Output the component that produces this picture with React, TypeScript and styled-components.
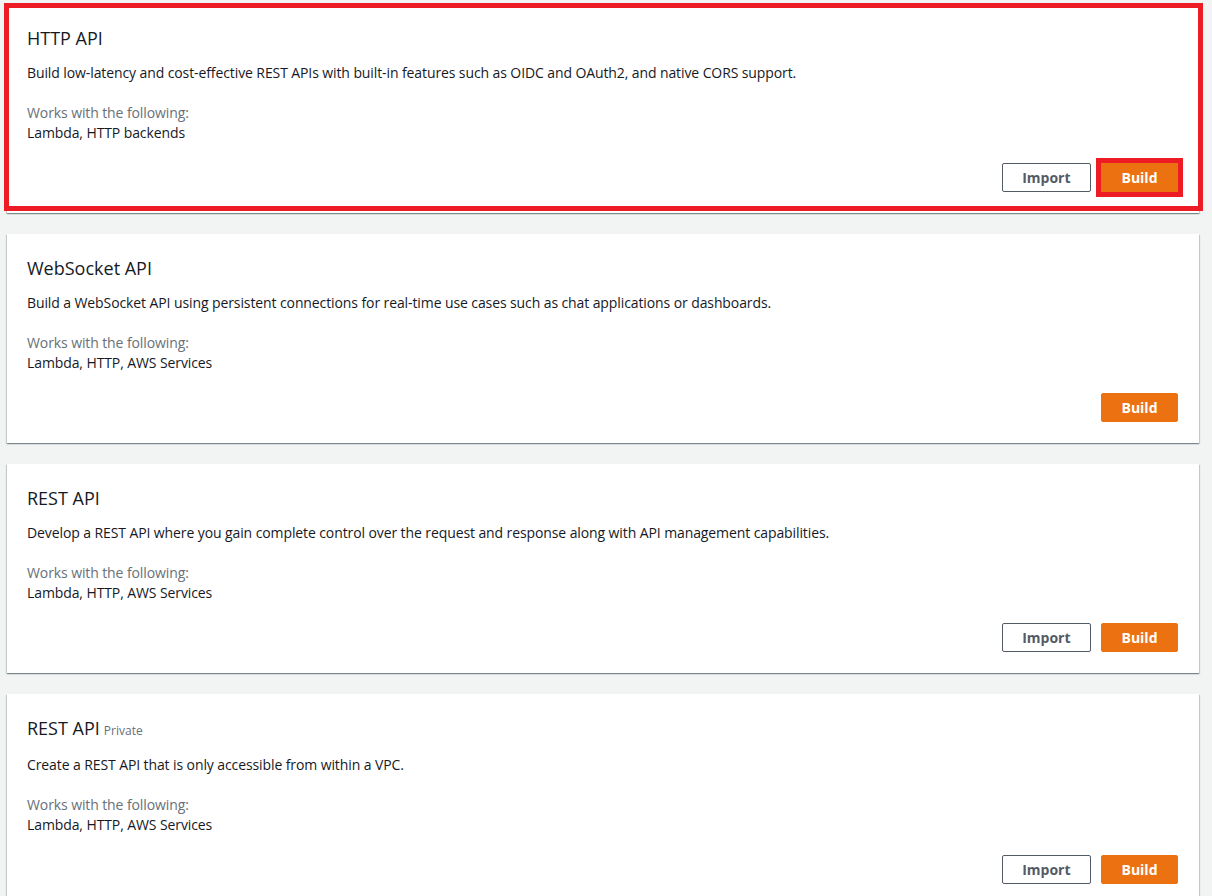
import React from "react";
import styled, { createGlobalStyle } from "styled-components";

const GlobalStyle = createGlobalStyle`
  html, body {
    margin: 0;
    padding: 0;
    background: #f2f3f3;
  }
  body {
    font-family: "Open Sans", "Noto Sans", Arial, sans-serif;
    color: #16191f;
  }
`;

const Page = styled.main`
  display: flex;
  flex-direction: column;
  gap: 21px;
  padding: 4px 13px 40px 7px;
  min-height: 896px;
  box-sizing: border-box;
`;

const Card = styled.section`
  position: relative;
  background: #ffffff;
  padding: 20px 21px 21px 20px;
  box-shadow: 0 1px 1px 0 rgba(0, 28, 36, 0.3), 1px 1px 1px 0 rgba(0, 28, 36, 0.15),
    -1px 1px 1px 0 rgba(0, 28, 36, 0.15);
  display: flex;
  flex-direction: column;
`;

const Highlight = styled.div`
  position: absolute;
  left: -3px;
  top: -1px;
  right: -4px;
  bottom: 2px;
  border: 5px solid #ed1c24;
  pointer-events: none;
`;

const Title = styled.h2<{ $tagged?: boolean }>`
  margin: 0 0 ${(p) => (p.$tagged ? "2px" : "0")};
  font-size: 18px;
  font-weight: 400;
  line-height: 28px;
  color: #16191f;
`;

const Tag = styled.span`
  font-size: 12px;
  line-height: 1;
  color: #687078;
  margin-left: 4px;
`;

const Description = styled.p`
  margin: 11px 0 0;
  font-size: 14px;
  letter-spacing: -0.1px;
  line-height: 20px;
  color: #16191f;
`;

const Works = styled.div`
  margin-top: 20px;
  font-size: 14px;
  letter-spacing: -0.1px;
  line-height: 20px;
`;

const WorksLabel = styled.div`
  color: #687078;
`;

const WorksValue = styled.div`
  color: #16191f;
`;

const Actions = styled.div`
  margin-top: 20px;
  display: flex;
  justify-content: flex-end;
  gap: 10px;
`;

const Button = styled.button<{ $primary?: boolean; $marked?: boolean }>`
  box-sizing: border-box;
  height: 29px;
  padding: 0 19.5px;
  border-radius: ${(p) => (p.$marked ? "0" : "2px")};
  font-family: "Open Sans", "Noto Sans", Arial, sans-serif;
  font-size: 14px;
  font-weight: 700;
  line-height: 27px;
  cursor: pointer;
  border: 1px solid ${(p) => (p.$primary ? "#ec7211" : "#545b64")};
  background: ${(p) => (p.$primary ? "#ec7211" : "#ffffff")};
  color: ${(p) => (p.$primary ? "#ffffff" : "#545b64")};
  outline: ${(p) => (p.$marked ? "5px solid #ed1c24" : "none")};
  outline-offset: 0;
`;

type Api = {
  title: string;
  tag?: string;
  description: string;
  works: string;
  importable: boolean;
  marked?: boolean;
};

const apis: Api[] = [
  {
    title: "HTTP API",
    description:
      "Build low-latency and cost-effective REST APIs with built-in features such as OIDC and OAuth2, and native CORS support.",
    works: "Lambda, HTTP backends",
    importable: true,
    marked: true,
  },
  {
    title: "WebSocket API",
    description:
      "Build a WebSocket API using persistent connections for real-time use cases such as chat applications or dashboards.",
    works: "Lambda, HTTP, AWS Services",
    importable: false,
  },
  {
    title: "REST API",
    description:
      "Develop a REST API where you gain complete control over the request and response along with API management capabilities.",
    works: "Lambda, HTTP, AWS Services",
    importable: true,
  },
  {
    title: "REST API",
    tag: "Private",
    description: "Create a REST API that is only accessible from within a VPC.",
    works: "Lambda, HTTP, AWS Services",
    importable: true,
  },
];

function ApiCard({ api }: { api: Api }) {
  return (
    <Card>
      {api.marked && <Highlight />}
      <Title $tagged={!!api.tag}>
        {api.title}
        {api.tag && <Tag>{api.tag}</Tag>}
      </Title>
      <Description>{api.description}</Description>
      <Works>
        <WorksLabel>Works with the following:</WorksLabel>
        <WorksValue>{api.works}</WorksValue>
      </Works>
      <Actions>
        {api.importable && <Button>Import</Button>}
        <Button $primary $marked={api.marked}>
          Build
        </Button>
      </Actions>
    </Card>
  );
}

export default function App() {
  return (
    <>
      <GlobalStyle />
      <Page>
        {apis.map((api, i) => (
          <ApiCard key={i} api={api} />
        ))}
      </Page>
    </>
  );
}
